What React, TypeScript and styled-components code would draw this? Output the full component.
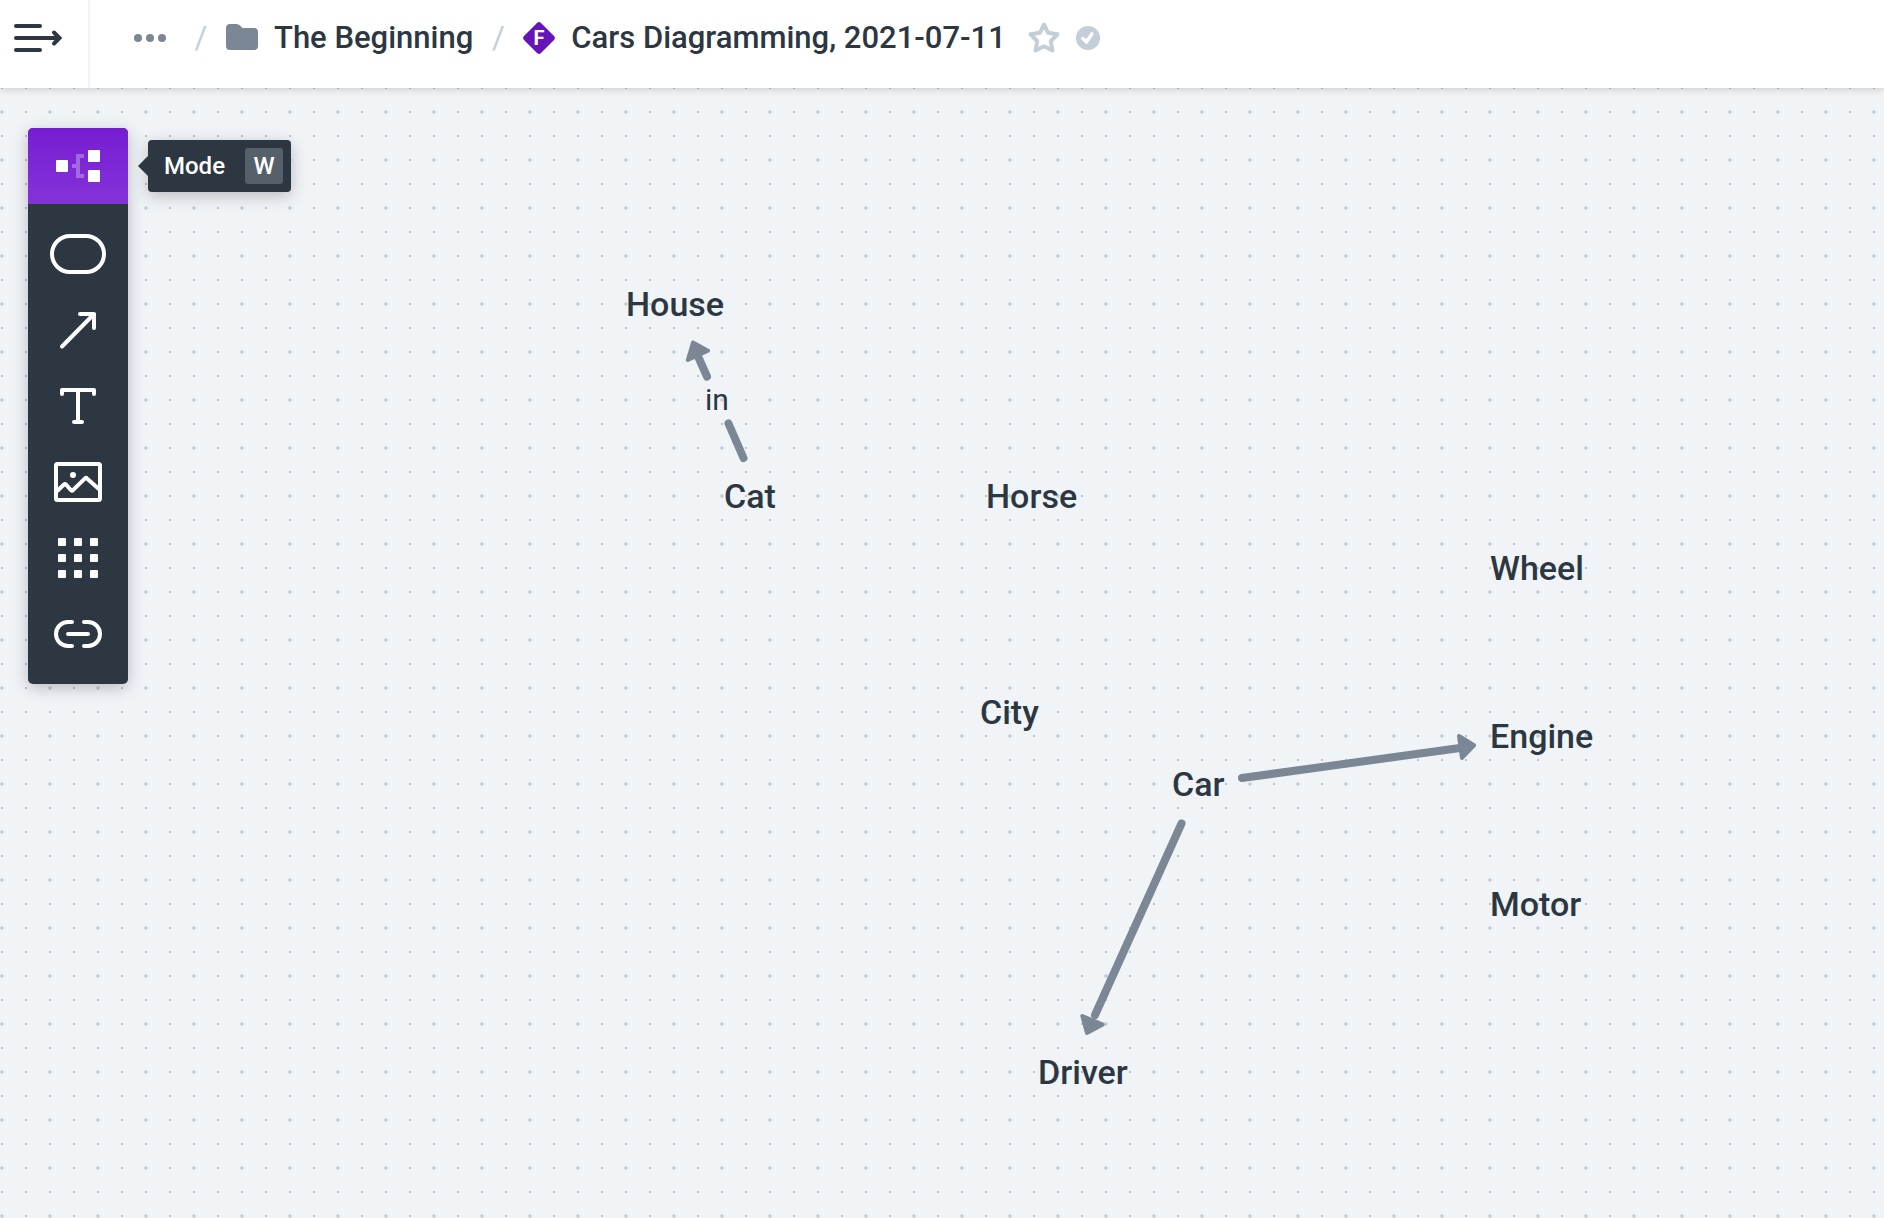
import React from "react";
import styled, { createGlobalStyle } from "styled-components";

const color = {
  ink: "#2c3742",
  slate: "#7b8794",
  mist: "#c4ced8",
  paper: "#f0f4f7",
  purple: "#6614b8",
};

const GlobalStyle = createGlobalStyle`
  *, *::before, *::after { box-sizing: border-box; }
  body {
    margin: 0;
    background: ${color.paper};
    color: ${color.ink};
    font-family: Roboto, "Liberation Sans", sans-serif;
  }
  button { font: inherit; color: inherit; border: 0; background: none; padding: 0; cursor: pointer; }
  svg { display: block; }
`;

const Page = styled.div`
  display: flex;
  flex-direction: column;
  min-height: 100vh;
`;

const Header = styled.header`
  position: relative;
  z-index: 1;
  display: flex;
  height: 88px;
  background: #fff;
  box-shadow: 0 1px 8px rgba(0, 0, 0, 0.18);
`;

const MenuButton = styled.button`
  display: flex;
  align-items: center;
  width: 90px;
  padding: 0 0 12px 12px;
  border-right: 2px solid ${color.paper};
`;

const Breadcrumbs = styled.nav`
  display: flex;
  align-items: center;
  padding: 0 34px 12px;
  font-size: 31px;
  line-height: 36px;
  font-weight: 500;
  white-space: nowrap;
`;

const MoreButton = styled.button`
  padding: 0 10px;
`;

const Separator = styled.span`
  width: 50px;
  text-align: center;
  color: ${color.mist};
  font-weight: 400;
`;

const Crumb = styled.a`
  display: flex;
  align-items: center;
  gap: 16px;
  color: inherit;
  text-decoration: none;
`;

const DocumentTitle = styled.h1`
  display: flex;
  align-items: center;
  gap: 16px;
  margin: 0;
  font: inherit;
`;

const Actions = styled.div`
  display: flex;
  align-items: center;
  gap: 16px;
  margin-left: 22px;
`;

const Canvas = styled.main`
  position: relative;
  flex: 1;
  overflow: hidden;
  padding: 40px 28px;
  background-color: ${color.paper};
  background-image:
    radial-gradient(circle at 24px 24px, #c8d3de 2px, transparent 2px),
    radial-gradient(circle at 12px 12px, #bdc4cd 1px, transparent 1px);
  background-size: 48px 48px, 24px 24px;
  background-position: -22px 0, -10px -12px;
`;

const Toolbar = styled.div`
  position: relative;
  z-index: 1;
  display: flex;
  flex-direction: column;
  width: 100px;
  padding-bottom: 12px;
  border-radius: 5px;
  background: ${color.ink};
  color: #fff;
  box-shadow: 0 4px 16px rgba(40, 20, 40, 0.26);
`;

const ToolSlot = styled.div`
  position: relative;
  margin-bottom: 12px;
`;

const ToolButton = styled.button<{ $active?: boolean }>`
  display: flex;
  align-items: center;
  justify-content: center;
  width: 100%;
  height: 76px;
  ${(p) =>
    p.$active &&
    `
    border-radius: 5px 5px 0 0;
    background: linear-gradient(#761dd2, #8433d8);
  `}
`;

const Tooltip = styled.div`
  position: absolute;
  left: 120px;
  top: 12px;
  display: flex;
  align-items: center;
  gap: 20px;
  height: 52px;
  padding: 0 8px 0 16px;
  border-radius: 4px;
  background: ${color.ink};
  font-size: 24px;
  line-height: 36px;
  font-weight: 500;
  box-shadow: 0 4px 16px rgba(40, 20, 40, 0.26);

  &::before {
    content: "";
    position: absolute;
    left: -10px;
    top: 16px;
    border: solid transparent;
    border-width: 10px 10px 10px 0;
    border-right-color: ${color.ink};
  }
`;

const Key = styled.kbd`
  width: 38px;
  border-radius: 3px;
  background: #55606a;
  font-family: inherit;
  text-align: center;
`;

const Connectors = styled.svg`
  position: absolute;
  left: 0;
  top: 0;
  width: 100%;
  height: 100%;
  pointer-events: none;
`;

const Node = styled.div<{ $x: number; $y: number }>`
  position: absolute;
  left: ${(p) => p.$x}px;
  top: ${(p) => p.$y}px;
  font-size: 34px;
  line-height: 48px;
  font-weight: 500;
  white-space: nowrap;
`;

const EdgeLabel = styled(Node)`
  font-size: 30px;
  font-weight: 400;
`;

const ToolIcon = ({ children }: { children: React.ReactNode }) => (
  <svg
    width="56"
    height="56"
    viewBox="0 0 56 56"
    fill="none"
    stroke="#fff"
    strokeWidth="4"
    strokeLinecap="round"
    strokeLinejoin="round"
    aria-hidden="true"
  >
    {children}
  </svg>
);

const tools = [
  { name: "Shape", icon: <rect x="2" y="10" width="52" height="36" rx="18" /> },
  { name: "Line", icon: <path d="M30 12H44V26M12 44.5L44 12" /> },
  { name: "Text", icon: <path d="M12 16V12H44V16M28 12V44M24 44H32" /> },
  {
    name: "Image",
    icon: (
      <>
        <rect x="6" y="10" width="44" height="36" rx="1.5" />
        <circle cx="23" cy="21" r="3" fill="#fff" stroke="none" />
        <path d="M6 38L14 30.5Q15 29.6 16 30.5L21 36.2Q22 37.2 23 36.2L35 24.4Q36 23.4 37 24.4L50 36" />
      </>
    ),
  },
  {
    name: "Icons",
    icon: [8, 24, 40].flatMap((y) =>
      [8, 24, 40].map((x) => (
        <rect key={`${x}-${y}`} x={x} y={y} width="8" height="8" rx="1" fill="#fff" stroke="none" />
      ))
    ),
  },
  {
    name: "Link",
    icon: <path d="M22 16H18A12 12 0 0 0 18 40H22M34 16H38A12 12 0 0 1 38 40H34M18 28H38" />,
  },
];

const nodes = [
  { text: "House", x: 626, y: 192 },
  { text: "Cat", x: 724, y: 384 },
  { text: "Horse", x: 986, y: 384 },
  { text: "Wheel", x: 1490, y: 456 },
  { text: "City", x: 980, y: 600 },
  { text: "Engine", x: 1490, y: 624 },
  { text: "Car", x: 1172, y: 672 },
  { text: "Motor", x: 1490, y: 792 },
  { text: "Driver", x: 1038, y: 960 },
];

export default function App() {
  return (
    <Page>
      <GlobalStyle />
      <Header>
        <MenuButton aria-label="Open sidebar">
          <svg width="52" height="32" viewBox="0 0 52 32" fill="none" stroke={color.ink} strokeWidth="4" strokeLinecap="round" aria-hidden="true">
            <path d="M4 4H28M4 16H46M4 28H28M42 10.5L47.5 16L42 21.5" />
          </svg>
        </MenuButton>
        <Breadcrumbs aria-label="Breadcrumb">
          <MoreButton aria-label="More folders">
            <svg width="32" height="8" viewBox="0 0 32 8" fill={color.slate} aria-hidden="true">
              <circle cx="4" cy="4" r="4" />
              <circle cx="16" cy="4" r="4" />
              <circle cx="28" cy="4" r="4" />
            </svg>
          </MoreButton>
          <Separator>/</Separator>
          <Crumb href="#folder">
            <svg width="32" height="28" viewBox="0 0 32 28" fill={color.slate} aria-hidden="true">
              <path d="M4 0H10.5Q12.5 0 14 1.5L16.5 4H28Q32 4 32 8V22Q32 26 28 26H4Q0 26 0 22V4Q0 0 4 0Z" />
            </svg>
            The Beginning
          </Crumb>
          <Separator>/</Separator>
          <DocumentTitle>
            <svg width="32" height="32" viewBox="0 0 32 32" aria-hidden="true">
              <path d="M14 1Q16 -.8 18 1L31 14Q32.8 16 31 18L18 31Q16 32.8 14 31L1 18Q-.8 16 1 14Z" fill={color.purple} />
              <text x="16" y="23" fill="#fff" fontSize="20" fontWeight="700" textAnchor="middle">F</text>
            </svg>
            Cars Diagramming, 2021-07-11
          </DocumentTitle>
          <Actions>
            <button aria-label="Add to favourites">
              <svg width="32" height="32" viewBox="0 0 32 32" fill="none" stroke={color.mist} strokeWidth="4" strokeLinejoin="round" aria-hidden="true">
                <path d="M16 2.5L20.1 10.8L29.5 12.3L22.8 19L24.4 28.5L16 24.2L7.6 28.5L9.2 19L2.5 12.3L11.9 10.8Z" />
              </svg>
            </button>
            <svg width="24" height="24" viewBox="0 0 24 24" role="img" aria-label="Saved">
              <circle cx="12" cy="12" r="12" fill={color.mist} />
              <path d="M6.8 12.5L10.5 16L16 7.8" fill="none" stroke="#fff" strokeWidth="3.4" strokeLinecap="round" strokeLinejoin="round" />
            </svg>
          </Actions>
        </Breadcrumbs>
      </Header>
      <Canvas>
        <Toolbar role="toolbar" aria-label="Tools">
          <ToolSlot>
            <ToolButton $active aria-label="Mode" aria-describedby="mode-tip">
              <ToolIcon>
                <g fill="#fff" stroke="none">
                  <rect x="6" y="22" width="12" height="12" rx="1" />
                  <rect x="38" y="12" width="12" height="12" rx="1" />
                  <rect x="38" y="32" width="12" height="12" rx="1" />
                  <path d="M22 26H26V16H34V20H30V36H34V40H26V30H22Z" fillOpacity="0.3" />
                </g>
              </ToolIcon>
            </ToolButton>
            <Tooltip role="tooltip" id="mode-tip">
              Mode <Key>W</Key>
            </Tooltip>
          </ToolSlot>
          {tools.map((tool) => (
            <ToolButton key={tool.name} aria-label={tool.name}>
              <ToolIcon>{tool.icon}</ToolIcon>
            </ToolButton>
          ))}
        </Toolbar>
        <Connectors fill={color.slate} stroke={color.slate} strokeLinecap="round" strokeLinejoin="round" aria-hidden="true">
          <path d="M743.5 370L728.5 335.5M707 288.5L696 264M1242 690L1460 660M1181.5 735.5L1095 927" strokeWidth="8" fill="none" />
          <path d="M693 254.5L708 262.7L687.8 272ZM1474 657.3L1459 648L1462 670ZM1087 945L1082.3 928L1102.8 936.5Z" strokeWidth="4" />
        </Connectors>
        {nodes.map((n) => (
          <Node key={n.text} $x={n.x} $y={n.y}>
            {n.text}
          </Node>
        ))}
        <EdgeLabel $x={705} $y={288}>
          in
        </EdgeLabel>
      </Canvas>
    </Page>
  );
}
